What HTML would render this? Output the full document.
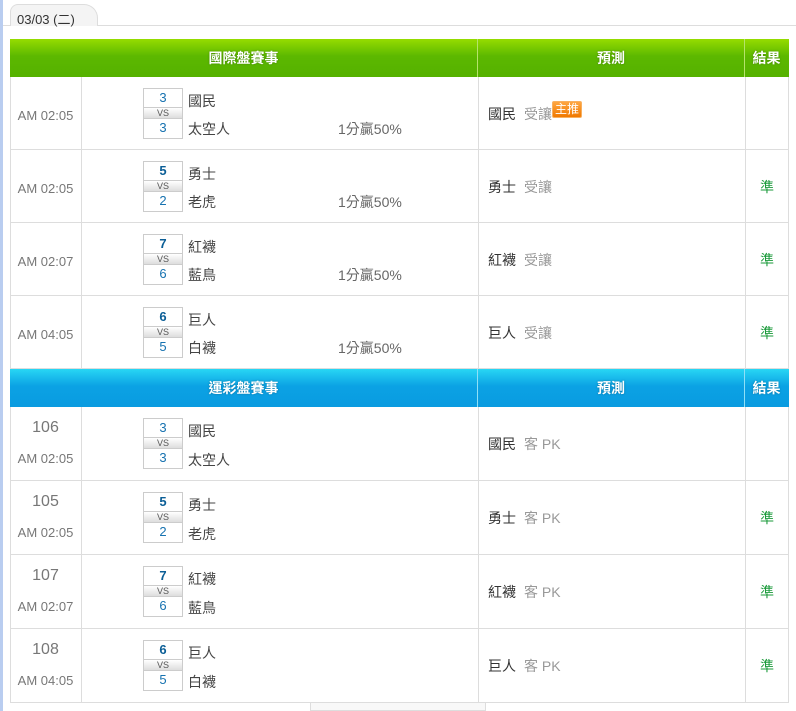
<!DOCTYPE html>
<html><head><meta charset="utf-8"><style>
*{margin:0;padding:0;box-sizing:border-box}
body{width:796px;height:711px;background:#fff;position:relative;overflow:hidden;font-family:"Liberation Sans","Noto Sans CJK TC",sans-serif}
.lb{position:absolute;left:0;top:0;width:3px;height:711px;background:#b9cdf0}
.tabbar{position:absolute;left:3px;top:25px;width:793px;height:1px;background:#ddd}
.tab{position:absolute;left:10px;top:4px;width:88px;height:22px;background:#f4f4f4;border:1px solid #ddd;border-bottom:none;border-radius:8px 14px 0 0;font-size:13px;color:#333;padding:4px 0 0 6px}
.r{position:absolute;left:10px;width:779px;border-bottom:1px solid #ddd;border-left:1px solid #ddd;border-right:1px solid #ddd}
.h{position:absolute;left:10px;width:779px;height:38px;color:#fff;font-weight:bold;font-size:14px}
.g{background:linear-gradient(#96dc00,#5cb800 45%,#55b100)}
.b{background:linear-gradient(#28d6f4,#0ba2e4 45%,#0a9be0)}
.h div,.r>div.c{position:absolute;top:0;height:100%}
.h div{line-height:38px;text-align:center;text-shadow:0 0 2px rgba(0,0,0,.3)}
.c1{left:0;width:71px;border-right:1px solid #ddd}
.c2{left:71px;width:397px;border-right:1px solid #ddd}
.c3{left:468px;width:267px;border-right:1px solid #ddd}
.c4{left:735px;width:43px}
.h .c1{width:468px;border-right:1px solid #b5e36c}
.h .c3{border-right:1px solid #b5e36c}
.h.b .c1,.h.b .c3{border-right-color:#8fe0f7}
.time{font-size:13px;color:#777;text-align:center}
.box{position:absolute;width:40px;height:51px;border:1px solid #ccc;background:#fff}
.box .s{height:18px;line-height:18px;text-align:center;font-size:13px;color:#1672b0}
.box .s.w{font-weight:bold;color:#0b5e96}
.box .v{height:12px;line-height:11px;text-align:center;font-size:9px;color:#555;background:linear-gradient(#fff,#ddd);border-top:1px solid #ccc;border-bottom:1px solid #ccc}
.t{position:absolute;font-size:14px;color:#444}
.p{position:absolute;font-size:14px;color:#666}
.pred{position:absolute;font-size:14px;color:#333}
.pred span{color:#999;margin-left:8px}
.res{position:absolute;font-size:14px;color:#1a9a3a}
.pred .tag{display:inline-block;background:linear-gradient(#ffa640,#f07800);color:#fff;font-size:12px;line-height:15px;height:17px;padding:0 2px;border:1px solid #f8b060;border-radius:2px;vertical-align:top;margin:-3px 0 0 0}
</style></head><body>
<div class="lb"></div>
<div class="tabbar"></div>
<div class="tab">03/03 (二)</div>

<div class="h g" style="top:39px"><div class="c1">國際盤賽事</div><div class="c3">預測</div><div class="c4">結果</div></div>

<div class="r" style="top:77px;height:73px"><div class="c c1"></div><div class="c c2"></div><div class="c c3"></div></div>
<div class="time" style="position:absolute;left:10px;width:71px;top:108px">AM 02:05</div>
<div class="box" style="left:143px;top:88px"><div class="s">3</div><div class="v">VS</div><div class="s">3</div></div>
<div class="t" style="left:188px;top:91px">國民</div><div class="t" style="left:188px;top:119px">太空人</div>
<div class="p" style="left:338px;top:119px">1分贏50%</div>
<div class="pred" style="left:488px;top:104px">國民<span>受讓</span><span class="tag">主推</span></div>

<div class="r" style="top:150px;height:73px"><div class="c c1"></div><div class="c c2"></div><div class="c c3"></div></div>
<div class="time" style="position:absolute;left:10px;width:71px;top:181px">AM 02:05</div>
<div class="box" style="left:143px;top:161px"><div class="s w">5</div><div class="v">VS</div><div class="s">2</div></div>
<div class="t" style="left:188px;top:164px">勇士</div><div class="t" style="left:188px;top:192px">老虎</div>
<div class="p" style="left:338px;top:192px">1分贏50%</div>
<div class="pred" style="left:488px;top:177px">勇士<span>受讓</span></div>
<div class="res" style="left:760px;top:177px">準</div>

<div class="r" style="top:223px;height:73px"><div class="c c1"></div><div class="c c2"></div><div class="c c3"></div></div>
<div class="time" style="position:absolute;left:10px;width:71px;top:254px">AM 02:07</div>
<div class="box" style="left:143px;top:234px"><div class="s w">7</div><div class="v">VS</div><div class="s">6</div></div>
<div class="t" style="left:188px;top:237px">紅襪</div><div class="t" style="left:188px;top:265px">藍鳥</div>
<div class="p" style="left:338px;top:265px">1分贏50%</div>
<div class="pred" style="left:488px;top:250px">紅襪<span>受讓</span></div>
<div class="res" style="left:760px;top:250px">準</div>

<div class="r" style="top:296px;height:73px"><div class="c c1"></div><div class="c c2"></div><div class="c c3"></div></div>
<div class="time" style="position:absolute;left:10px;width:71px;top:327px">AM 04:05</div>
<div class="box" style="left:143px;top:307px"><div class="s w">6</div><div class="v">VS</div><div class="s">5</div></div>
<div class="t" style="left:188px;top:310px">巨人</div><div class="t" style="left:188px;top:338px">白襪</div>
<div class="p" style="left:338px;top:338px">1分贏50%</div>
<div class="pred" style="left:488px;top:323px">巨人<span>受讓</span></div>
<div class="res" style="left:760px;top:323px">準</div>

<div class="h b" style="top:369px"><div class="c1">運彩盤賽事</div><div class="c3">預測</div><div class="c4">結果</div></div>

<div class="r" style="top:407px;height:74px"><div class="c c1"></div><div class="c c2"></div><div class="c c3"></div></div>
<div class="time" style="position:absolute;left:10px;width:71px;top:419px;font-size:16px">106</div>
<div class="time" style="position:absolute;left:10px;width:71px;top:451px">AM 02:05</div>
<div class="box" style="left:143px;top:418px"><div class="s">3</div><div class="v">VS</div><div class="s">3</div></div>
<div class="t" style="left:188px;top:421px">國民</div><div class="t" style="left:188px;top:450px">太空人</div>
<div class="pred" style="left:488px;top:434px">國民<span>客 PK</span></div>

<div class="r" style="top:481px;height:74px"><div class="c c1"></div><div class="c c2"></div><div class="c c3"></div></div>
<div class="time" style="position:absolute;left:10px;width:71px;top:493px;font-size:16px">105</div>
<div class="time" style="position:absolute;left:10px;width:71px;top:525px">AM 02:05</div>
<div class="box" style="left:143px;top:492px"><div class="s w">5</div><div class="v">VS</div><div class="s">2</div></div>
<div class="t" style="left:188px;top:495px">勇士</div><div class="t" style="left:188px;top:524px">老虎</div>
<div class="pred" style="left:488px;top:508px">勇士<span>客 PK</span></div>
<div class="res" style="left:760px;top:508px">準</div>

<div class="r" style="top:555px;height:74px"><div class="c c1"></div><div class="c c2"></div><div class="c c3"></div></div>
<div class="time" style="position:absolute;left:10px;width:71px;top:567px;font-size:16px">107</div>
<div class="time" style="position:absolute;left:10px;width:71px;top:599px">AM 02:07</div>
<div class="box" style="left:143px;top:566px"><div class="s w">7</div><div class="v">VS</div><div class="s">6</div></div>
<div class="t" style="left:188px;top:569px">紅襪</div><div class="t" style="left:188px;top:598px">藍鳥</div>
<div class="pred" style="left:488px;top:582px">紅襪<span>客 PK</span></div>
<div class="res" style="left:760px;top:582px">準</div>

<div class="r" style="top:629px;height:74px"><div class="c c1"></div><div class="c c2"></div><div class="c c3"></div></div>
<div class="time" style="position:absolute;left:10px;width:71px;top:641px;font-size:16px">108</div>
<div class="time" style="position:absolute;left:10px;width:71px;top:673px">AM 04:05</div>
<div class="box" style="left:143px;top:640px"><div class="s w">6</div><div class="v">VS</div><div class="s">5</div></div>
<div class="t" style="left:188px;top:643px">巨人</div><div class="t" style="left:188px;top:672px">白襪</div>
<div class="pred" style="left:488px;top:656px">巨人<span>客 PK</span></div>
<div class="res" style="left:760px;top:656px">準</div>

<div style="position:absolute;left:310px;top:703px;width:176px;height:8px;border:1px solid #ddd;border-top:none;background:#f8f8f8"></div>
</body></html>
